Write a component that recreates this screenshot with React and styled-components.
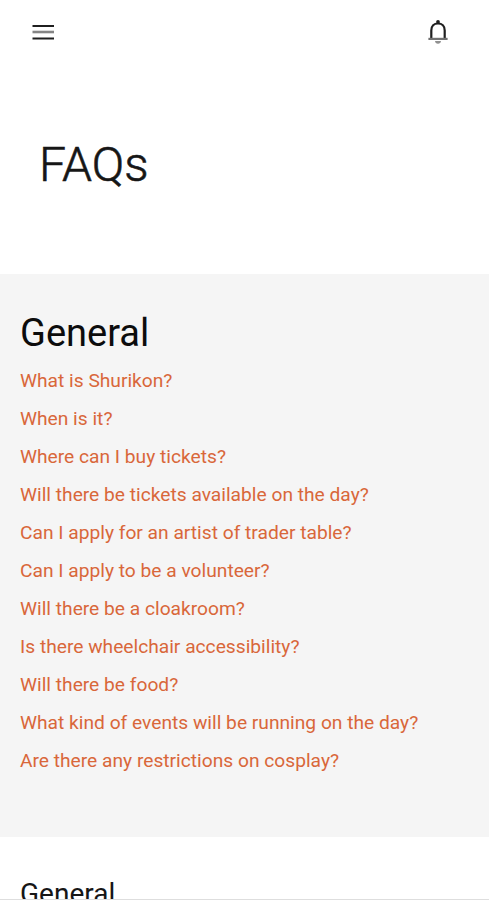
import React from "react";
import styled, { createGlobalStyle } from "styled-components";

const GlobalStyle = createGlobalStyle`
  *, *::before, *::after { box-sizing: border-box; }
  html, body { margin: 0; padding: 0; }
  body { background: #fff; overflow: hidden; }
`;

const Page = styled.div`
  display: flex;
  flex-direction: column;
  height: 900px;
  overflow: hidden;
  background: #fff;
  color: #161616;
  font-family: Roboto, "Liberation Sans", sans-serif;
  border-bottom: 1px solid #dedede;
`;

const TopBar = styled.header`
  flex: none;
  display: flex;
  align-items: center;
  justify-content: space-between;
  height: 64px;
  padding: 0 36px 0 28px;
`;

const IconButton = styled.button`
  display: flex;
  align-items: center;
  justify-content: center;
  width: 30px;
  height: 30px;
  padding: 0;
  border: 0;
  background: none;
  color: #1f1f1f;
`;

const Hero = styled.section`
  flex: none;
  height: 210px;
  padding: 72px 39px 0;
`;

const PageTitle = styled.h1`
  margin: 0;
  font-size: 48px;
  line-height: 58px;
  font-weight: 300;
  -webkit-text-stroke: 0.6px currentColor;
`;

const TopicSection = styled.section`
  flex: none;
  height: 563px;
  padding: 35px 20px 0;
  background: #f5f5f5;
`;

const SectionTitle = styled.h2`
  margin: 0;
  color: #0c0c0c;
  font-size: 38px;
  line-height: 48px;
  font-weight: 400;
`;

const LinkList = styled.ul`
  margin: 5px 0 0;
  padding: 0;
  list-style: none;
`;

const LinkItem = styled.li`
  height: 38px;
  line-height: 38px;
  font-size: 19.2px;
  white-space: nowrap;
`;

const QuestionLink = styled.a`
  color: #d9673a;
  text-decoration: none;
`;

const AnswerSection = styled.section`
  flex: none;
  padding: 40px 20px 0;
`;

const AnswerTitle = styled.h3`
  margin: 0;
  font-size: 28px;
  line-height: 34px;
  font-weight: 400;
`;

const questions = [
  "What is Shurikon?",
  "When is it?",
  "Where can I buy tickets?",
  "Will there be tickets available on the day?",
  "Can I apply for an artist of trader table?",
  "Can I apply to be a volunteer?",
  "Will there be a cloakroom?",
  "Is there wheelchair accessibility?",
  "Will there be food?",
  "What kind of events will be running on the day?",
  "Are there any restrictions on cosplay?",
];

export default function App() {
  return (
    <>
      <GlobalStyle />
      <Page>
        <TopBar>
          <IconButton aria-label="Menu">
            <svg width="30" height="30" viewBox="0 0 30 30" fill="none" stroke="currentColor" strokeWidth="2">
              <path d="M4.500 9h21.500M4.500 21.500h21.500" />
              <path d="M4.500 15h21.500" stroke="#858585" strokeWidth="2.6" />
            </svg>
          </IconButton>
          <IconButton aria-label="Notifications">
            <svg width="30" height="30" viewBox="0 0 30 30" fill="none" stroke="currentColor" strokeWidth="2.2">
              <path d="M8.300 21v-7.500c0-4.300 2.700-7 6.700-7s6.700 2.700 6.700 7v7.500" />
              <circle cx="15" cy="5" r="1.900" fill="currentColor" stroke="none" />
              <path d="M5.400 21.900h19.200" stroke="#707070" />
              <path d="M12 24h6c-.2 1.700-1.300 2.800-3 2.800s-2.800-1.100-3-2.800z" fill="#909090" stroke="none" />
            </svg>
          </IconButton>
        </TopBar>
        <Hero>
          <PageTitle>FAQs</PageTitle>
        </Hero>
        <TopicSection>
          <SectionTitle>General</SectionTitle>
          <LinkList>
            {questions.map((q) => (
              <LinkItem key={q}>
                <QuestionLink href="#">{q}</QuestionLink>
              </LinkItem>
            ))}
          </LinkList>
        </TopicSection>
        <AnswerSection>
          <AnswerTitle>General</AnswerTitle>
        </AnswerSection>
      </Page>
    </>
  );
}
